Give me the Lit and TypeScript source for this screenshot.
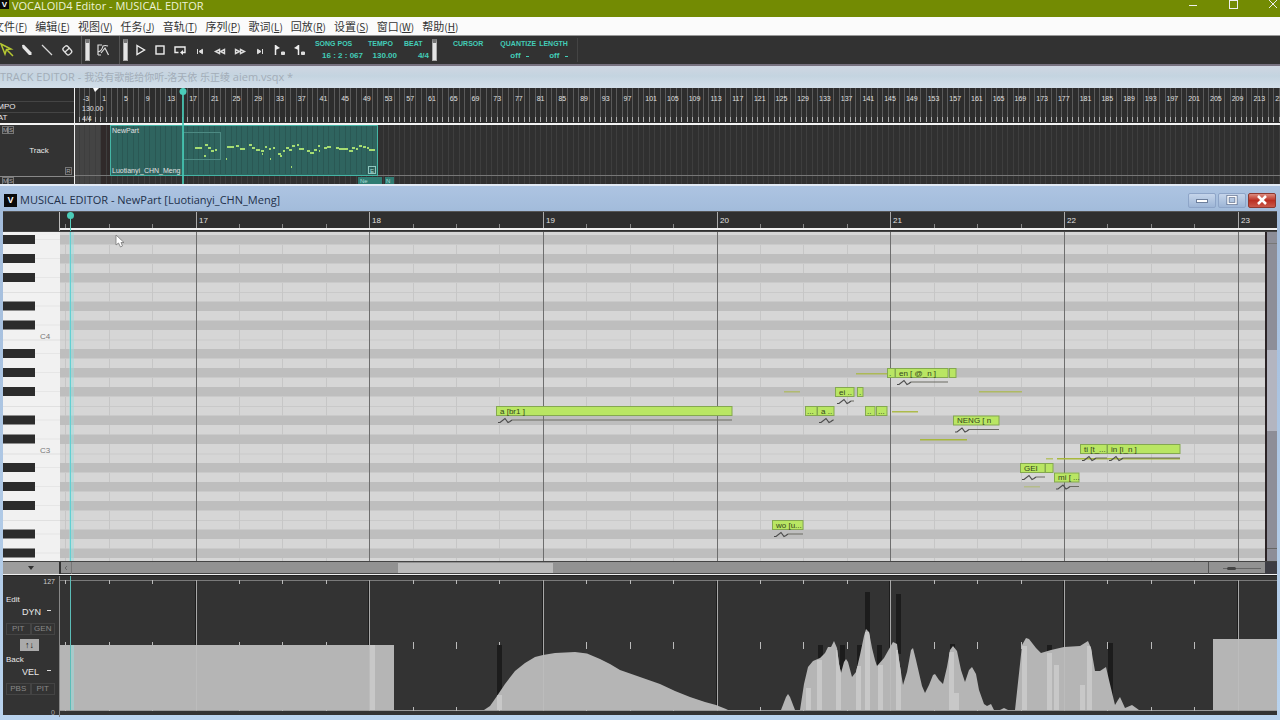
import { LitElement, html, svg, css } from "lit";
import { customElement, state } from "lit/decorators.js";

/* ---------- shared scales ---------- */
const TRACK_MEASURE = 5.43; // width of one measure in the track view
const TRACK_FIRST = -2; // number of the measure at the left edge of the track view
const TRACK_ORIGIN = 8;
const TRACK_HEAD = 75;
const MEASURE = 173.7; // width of one measure in the piano roll
const BEAT = MEASURE / 4;
const FIRST_MEASURE = 17;
const FIRST_OFFSET = 136;
const ROLL_LEFT = 60;
const KEY = 9.5; // height of one key
const TOP_KEY = 3; // visible part of the topmost key

/* Keys going down from A#4; true marks a black key. */
const OCTAVE = [true, false, true, false, true, false, false, true, false, true, false, false];
const keys = Array.from({ length: 35 }, (_, i) => ({
  black: OCTAVE[i % 12],
  y: TOP_KEY + i * KEY,
  split: i % 12 === 6 || i % 12 === 11,
  name: i % 12 === 10 && i < 34 ? `C${4 - Math.floor(i / 12)}` : "",
}));

interface Note { x: number; row: number; w: number; text: string; pitch?: boolean }
const notes: Note[] = [
  { x: 436, row: 18, w: 236, text: "a [br1 ]", pitch: true },
  { x: 712, row: 30, w: 31, text: "wo [u...", pitch: true },
  { x: 745, row: 18, w: 12, text: "..." },
  { x: 757, row: 18, w: 17, text: "a ..", pitch: true },
  { x: 775, row: 16, w: 19, text: "ei ..", pitch: true },
  { x: 797, row: 16, w: 6, text: "." },
  { x: 805, row: 18, w: 10, text: ".." },
  { x: 816, row: 18, w: 11, text: "..." },
  { x: 827, row: 14, w: 8, text: "." },
  { x: 835, row: 14, w: 53, text: "en [ @_n ]", pitch: true },
  { x: 889, row: 14, w: 7, text: "" },
  { x: 893, row: 19, w: 46, text: "NENG [ n", pitch: true },
  { x: 960, row: 24, w: 25, text: "GEI", pitch: true },
  { x: 985, row: 24, w: 8, text: "" },
  { x: 994, row: 25, w: 25, text: "mi [ ...", pitch: true },
  { x: 1020, row: 22, w: 27, text: "ti [t_...", pitch: true },
  { x: 1047, row: 22, w: 73, text: "in [i_n ]", pitch: true },
];
const glides = [
  [724, 159, 16, 0.6], [796, 141, 32, 0.8], [832, 179, 26, 0.9], [860, 207, 47, 1], [919, 159, 43, 0.7],
  [964, 254, 16, 0.4], [986, 226, 7, 0.7], [997, 226, 123, 1],
];
const partNotes = [
  [85, 22, 7], [95, 19, 3], [98, 22, 3], [101, 25, 3], [105, 24, 2], [94, 30, 2], [116, 33, 1], [117, 21, 7],
  [126, 20, 3], [130, 23, 5], [139, 19, 3], [142, 22, 3], [146, 24, 4], [151, 25, 3], [152, 28, 1], [155, 21, 2],
  [159, 23, 2], [160, 33, 1], [163, 22, 2], [168, 28, 3], [170, 30, 2], [173, 25, 2], [176, 22, 3], [179, 24, 3],
  [182, 20, 3], [187, 19, 2], [189, 23, 5], [197, 25, 3], [200, 27, 4], [204, 24, 3], [208, 20, 2], [209, 25, 1],
  [214, 22, 3], [217, 21, 4], [226, 22, 3], [229, 23, 9], [239, 25, 4], [242, 22, 3], [246, 23, 2], [249, 20, 3],
  [253, 21, 3], [257, 22, 2], [259, 24, 6], [181, 41, 1],
];

/* Dynamics curve, in units of the parameter pane. */
const dynamics = [
  "M-1 134V69H334V134Z",
  "M424 134L430 130 437 120 445 108 455 95 465 87 475 81 483 79 495 77 515 76 527 77.500 540 83 550 88 560 94 580 101 600 108 615 115 630 121 645 126 656 129 666 133 668 134Z",
  "M721 134L726 121 728 118 730 121 735 134Z",
  "M740 134L744 108 748 91 753 85 760 82 765 77 768 71 771 71 774 65 777 72 779 88 781 97 784 86 786 83 788 86 792 101 796 96 800 79 804 60 806 53 809 56 812 72 815 84 817 90 824 82 833 66 837 68 839 84 843 109 847 96 851 74 853 72 856 84 862 110 865 117 869 109 873 99 875 98 879 104 883 108 887 91 890 74 893 70 897 75 901 94 905 106 909 94 912 91 916 98 919 114 924 128 927 130 931 128 934 134Z",
  "M940 134L944 132 948 134Z",
  "M955 134L960 88 962 69 966 62 969 63 976 72 981 77 991 74 1004 71 1020 70 1028 65 1031 72 1035 95 1040 95 1046 91 1049 104 1055 129 1058 124 1060 121 1065 132 1072 129 1079 134Z",
  "M1153 134V63H2600V134Z",
];
const shadowBars = [
  [437, 69, 60], [758, 69, 20], [780, 69, 32], [797, 69, 30], [805, 16, 60], [817, 69, 24], [836, 18, 60],
  [890, 68, 10], [987, 69, 14], [1048, 67, 64],
];
const lightBars = [
  [310, 69], [437, 119], [746, 112], [757, 84], [776, 74], [796, 90], [805, 56], [818, 89], [836, 74], [889, 76],
  [894, 117], [962, 70], [987, 77], [994, 89], [1020, 109], [1027, 70],
];

const MENUS = [["文件", "F"], ["编辑", "E"], ["视图", "V"], ["任务", "J"], ["音轨", "T"], ["序列", "P"],
  ["歌词", "L"], ["回放", "R"], ["设置", "S"], ["窗口", "W"], ["帮助", "H"]];

const icon = (body: unknown) => html`<svg class="icon" width="20" height="20" viewBox="0 0 20 20" aria-hidden="true">${body}</svg>`;
const EDIT_TOOLS = [
  ["Select", svg`<path d="M4 4L14 9 9.500 9.500 8 14Z M9.500 9.500L16 16" fill="none" stroke="#b5c832" stroke-width="1.500"/>`],
  ["Pencil", svg`<path d="M5 5L7 4.800 14.500 12.500 14.500 15 12 15 5.500 8Z" fill="#e6e6e6"/>`],
  ["Line", svg`<path d="M5 5L15 15" stroke="#d8d8d8" stroke-width="1.300"/>`],
  ["Eraser", svg`<g fill="none" stroke="#e0e0e0" stroke-width="1.300"><rect x="6" y="7" width="9" height="6" rx="2" transform="rotate(48 10 10)"/><path d="M8 12L12.500 8"/></g>`],
] as const;
const TRANSPORT = [
  ["Play", svg`<path d="M7 5.500L14.500 10 7 14.500Z" fill="none" stroke="#eee" stroke-width="1.400"/>`],
  ["Stop", svg`<rect x="6" y="6" width="8" height="8" fill="none" stroke="#eee" stroke-width="1.400"/>`],
  ["Loop", svg`<path d="M8.500 12.500H5V7H15V12.500H12" fill="none" stroke="#eee" stroke-width="1.400"/><path d="M13 10V15L10 12.500Z" fill="#eee"/>`],
  ["To start", svg`<path d="M7.500 9V14M12.500 9.300V13.700L9 11.500Z" fill="#ddd" stroke="#ddd"/>`],
  ["Rewind", svg`<path d="M9.500 9.500V13.500L5.500 11.500ZM14.500 9.500V13.500L10.500 11.500Z" fill="none" stroke="#ddd" stroke-width="1.400"/>`],
  ["Forward", svg`<path d="M5.500 9.500V13.500L9.500 11.500ZM10.500 9.500V13.500L14.500 11.500Z" fill="none" stroke="#ddd" stroke-width="1.400"/>`],
  ["To end", svg`<path d="M12.500 9V14M7.500 9.300V13.700L11 11.500Z" fill="#ddd" stroke="#ddd"/>`],
  ["Start marker", svg`<path d="M5.500 5V15" stroke="#eee" stroke-width="1.500"/><path d="M5.500 5L10 8 5.500 10Z" fill="#eee"/><path d="M11.500 12H14.500V14.500H11.500Z" fill="#ddd" stroke="#ddd"/>`],
  ["End marker", svg`<path d="M8.500 5V15" stroke="#eee" stroke-width="1.500"/><path d="M8.500 5L4 8 8.500 10Z" fill="#eee"/><path d="M11.500 12H14.500V14.500H11.500Z" fill="#ddd" stroke="#ddd"/>`],
] as const;

@customElement("app-root")
export class AppRoot extends LitElement {
  static styles = css`
    :host { display: flex; flex-direction: column; height: 100vh; overflow: hidden; background: #333;
      font-family: "Liberation Sans", "Noto Sans CJK SC", sans-serif; color: #e8e8e8; }
    * { box-sizing: border-box; }
    button, select { font: inherit; color: inherit; background: none; border: 0; padding: 0; margin: 0; }
    select { appearance: none; }
    svg { display: block; }
    .logo { background: #0a0a0a; color: #fff; font: bold 8px "Liberation Sans", sans-serif; text-align: center; flex: none; }

    .titlebar { flex: none; display: flex; align-items: flex-start; height: 17px; background: #738b03; color: #eef2d6;
      font: 11px/11px "Open Sans", "Noto Sans", sans-serif; }
    .titlebar .logo { width: 9px; height: 9px; line-height: 9px; margin-right: 3px; }
    .titlebar .name { flex: 1; white-space: nowrap; }
    .titlebar .sys { width: 40px; height: 16px; }
    .titlebar .syss { display: flex; margin-right: -13px; }

    .menubar { flex: none; display: flex; gap: 8px; height: 18px; background: #fbfbfb; color: #333;
      padding-left: 3px; margin-left: -10px; align-items: center;
      font: 11px/18px "Noto Sans CJK SC", sans-serif; }
    .menubar button { white-space: nowrap; }
    .key { font-size: 10px; }

    .toolbar { flex: none; display: flex; align-items: center; height: 31px; background: #323232;
      border-top: 1px solid #999; border-bottom: 2px solid #77717f; }
    .tools { display: flex; height: 28px; align-items: center; }
    .tools button { width: 20px; height: 20px; }
    .edit { margin-left: -3px; border-right: 1px solid #555; padding-right: 4px; }
    .ctl { border-right: 1px solid #555; padding: 0 6px 0 1px; }
    .grip { width: 5px; height: 22px; margin: 0 2px 0 3px; background: #e4e4e4; border: 1px solid #aaa; border-top: 4px solid #777; flex: none; }
    .readout { display: flex; padding-left: 12px; color: #43cdb8; font: bold 7px/12px "Liberation Sans", sans-serif; }
    .readout .val { font-size: 8px; white-space: pre; display: block; text-align: right; }
    .readout label { display: block; }
    .readout select { font-size: 8px; width: 20px; height: 12px; line-height: 12px; display: block; margin-left: 10px;
      background: linear-gradient(#43cdb8, #43cdb8) right 1px top 6px / 3px 1px no-repeat; }
    .readout.now { padding-left: 3px; gap: 5px; }
    .song { width: 50px; }
    .tempo { width: 29px; }
    .beat { width: 27px; padding-left: 2px; }
    .readout.settings { gap: 3px; padding: 0 8px 0 14px; border-right: 1px solid #444; }
    .cursor { margin-right: 14px; }

    .tracktitle { flex: none; height: 22px; background: linear-gradient(#cfd6e2, #c4d4e0 45%, #d3dfea); color: #a3adb8;
      font: 11px/22px "Open Sans", "Noto Sans CJK SC", sans-serif; white-space: nowrap; overflow: hidden; }
    .song-name { font-size: 10px; }
    .tracks { flex: none; display: grid; grid-template-columns: 75px 1fr; height: 96px; background: #303030; overflow: hidden; }
    .heads { border-right: 1px solid #eee; overflow: hidden; font-size: 8px; line-height: 10px; }
    .rulerhead { height: 35px; padding-top: 13px; display: flex; flex-direction: column; align-items: flex-start; background: #2b2b2b; }
    .rulerhead span { border-top: 1px solid #444; width: 74px; text-indent: -13px; height: 11px; }
    .trackhead { border-top: 2px solid #f4f4f4; height: 53px; display: flex; flex-direction: column; justify-content: space-between;
      background: #333; padding: 1px 2px; }
    .trackhead .mid { text-align: center; line-height: 10px; padding-left: 4px; }
    .mini { font-size: 6px; line-height: 7px; color: #aaa; height: 8px; display: flex; }
    .mini button { border: 1px solid #777; width: 6px; height: 8px; line-height: 6px; }
    .mini.end { justify-content: flex-end; }
    .mini.end button { width: 7px; }
    .next { border-top: 1px solid #888; height: 9px; padding: 0 2px; }
    .lane { min-width: 0; overflow: hidden; }

    .win { flex: 1; min-height: 0; display: flex; flex-direction: column; padding: 0 3px 5px 3px; border-top: 2px solid #e2eaf5;
      background: linear-gradient(#adc4e2, #a3bcdb 24px, #b9d3ee); }
    .wintitle { flex: none; height: 25px; display: flex; align-items: center; color: #22304a; font: 11px/20px "Open Sans", "Noto Sans", sans-serif; padding-top: 3px; }
    .wintitle .logo { width: 13px; height: 13px; line-height: 13px; margin: 0 3px 0 1px; font-size: 9px; }
    .wintitle .name { flex: 1; white-space: nowrap; }
    .wintitle button { width: 28px; height: 15px; margin-right: 2px; border: 1px solid #8ea5c8; border-radius: 2px; background: linear-gradient(#c5d5ea, #9db5d6); display: grid; place-items: center; }
    .wintitle button.close { background: linear-gradient(#dc8c80, #bb2f22 50%, #c9584a); border-color: #8d3830; margin-right: 1px; }
    .row { display: grid; grid-template-columns: 57px 1fr; }
    .ruler { flex: none; height: 21px; background: #2f2f2f; border-top: 1px solid #555; border-bottom: 1px solid #444; }
    .corner { border-right: 1px solid #bbb; background: #303030; }
    .rule { overflow: hidden; min-width: 0; }
    .roll { flex: 1; min-height: 0; grid-template-columns: 57px 1fr 12px; background: #d6d6d6; }
    .roll > svg, .rule > svg { width: 100%; height: 100%; overflow: hidden; }
    .vbar { background: #8d8e98; border-left: 2px solid #2b2326; display: flex; flex-direction: column; }
    .vbar .up { height: 12px; border-bottom: 1px solid #777; }
    .vbar .sp { flex: 107; }
    .vbar .thumb { flex: 81; background: #b3b5c0; }
    .vbar .rest { flex: 118; border-bottom: 1px solid #666; }
    .vbar .down { height: 12px; }
    .hbar { flex: none; height: 14px; border-top: 1px solid #444; border-bottom: 1px solid #f0f0f0; background: #929292;
      display: flex; box-shadow: inset 0 -1px 0 #444; }
    .hbar .mode { width: 58px; border-right: 2px solid #333; display: grid; place-items: center; background: #9d9d9d; }
    .hbar .arrow { width: 11px; border-right: 1px solid #777; display: grid; place-items: center; }
    .hbar .a { flex: 326; }
    .hbar .t { flex: 155; background: #bbb; margin: 1px 0; }
    .hbar .b { flex: 656; border-right: 1px solid #555; }
    .hbar .zoom { width: 56px; display: flex; align-items: center; padding: 0 4px 0 14px; }
    .hbar .end { width: 12px; background: #3d3d44; }
    input[type="range"] { appearance: none; width: 100%; height: 10px; margin: 0; background: linear-gradient(#666, #666) center / 100% 1px no-repeat; }
    input[type="range"]::-webkit-slider-thumb { appearance: none; width: 9px; height: 3px; background: #444; border-radius: 2px; }
    .params { flex: none; height: 140px; background: #333; border-top: 1px solid #222; }
    .side { border-right: 1px solid #888; display: flex; flex-direction: column; padding: 0 4px 0 3px; font-size: 8px; }
    .side .max { font-size: 7px; line-height: 9px; text-align: right; color: #ccc; height: 19px; padding-top: 1px; }
    .side .min { font-size: 7px; line-height: 9px; text-align: right; color: #aaa; margin-top: 13px; }
    .side label { line-height: 10px; height: 11px; }
    .side select { font-size: 9px; height: 12px; line-height: 12px; width: 34px; margin-left: 12px; padding-left: 4px; display: block;
      background: linear-gradient(#ddd, #ddd) right 1px top 4px / 4px 1px no-repeat; }
    .side .pair { display: grid; grid-template-columns: 1fr 1fr; height: 12px; margin-top: 5px; }
    .side .pair button { border: 1px solid #444; color: #888; font-size: 8px; line-height: 10px; }
    .side .swap { align-self: flex-start; width: 19px; height: 12px; line-height: 12px; margin: 4px 0 4px 14px; background: #aaa; color: #111; font-size: 9px; }
  `;

  @state() private wide = window.innerWidth;
  private onResize = () => { this.wide = window.innerWidth; };

  connectedCallback() {
    super.connectedCallback();
    window.addEventListener("resize", this.onResize);
  }
  disconnectedCallback() {
    window.removeEventListener("resize", this.onResize);
    super.disconnectedCallback();
  }

  private get measures() {
    const count = Math.max(1, Math.ceil((this.wide - ROLL_LEFT - FIRST_OFFSET - 15) / MEASURE));
    return Array.from({ length: count }, (_, i) => ({ n: FIRST_MEASURE + i, x: Math.floor(FIRST_OFFSET + i * MEASURE) }));
  }
  private get beats() {
    const count = Math.ceil(this.wide / BEAT);
    return Array.from({ length: count }, (_, i) => i - 3)
      .filter((i) => i % 4 !== 0)
      .map((i) => Math.floor(FIRST_OFFSET + i * BEAT));
  }

  private trackLane() {
    const count = Math.ceil((this.wide - TRACK_HEAD) / TRACK_MEASURE) + 1;
    const mx = (n: number) => TRACK_ORIGIN + 1 + (n - TRACK_FIRST) * TRACK_MEASURE;
    const lines = Array.from({ length: count }, (_, i) => Math.round(mx(TRACK_FIRST + i - 1)));
    const labels = Array.from({ length: Math.floor(count / 4) }, (_, i) => 1 + i * 4);
    return svg`
      <svg class="lane" width="100%" height="96" font-family="Liberation Sans, sans-serif" fill="#e0e0e0">
        <rect width="100%" height="35" fill="#2d2d2d"/>
        <g shape-rendering="crispEdges">
          <rect y="37" width="25" height="60" fill="#444"/>
          <rect x="25" y="37" width="10" height="60" fill="#302a2a"/>
          ${lines.map((x) => svg`<rect x=${x} y="0" width="1" height="29" fill="#5a5a5a"/>
            <rect x=${x} y="29" width="1" height="5" fill="#aaa"/>
            <rect x=${x} y="37" width="1" height="60" fill="#3e3e3e"/>`)}
          <rect y="35" width="100%" height="2" fill="#f4f4f4"/>
          <rect y="87" width="100%" height="1" fill="#777"/>
        </g>
        <g font-size="7">
          <text x="8" y="13">-3</text>
          ${labels.map((n) => svg`<text x=${mx(n) + 2} y="13">${n}</text>`)}
          <text x="7" y="23">130.00</text><text x="7" y="33">4/4</text>
        </g>
        <path d="M18 0H24L20 4Z" fill="#fff"/>
        <rect x="36" y="37" width="266" height="50" fill="#2f645f"/>
        <g shape-rendering="crispEdges">
          ${lines.filter((x) => x > 37 && x < 302).map((x) => svg`<rect x=${x} y="38" width="1" height="48" fill="#2a5854"/>`)}
          <rect x="35.500" y="37.500" width="267" height="50" fill="none" stroke="#45b5a5"/>
          <rect x="108.500" y="44.500" width="37" height="27" fill="none" stroke="#4d8a83"/>
          ${partNotes.map(([x, y, w]) => svg`<rect x=${x + 35} y=${y + 37} width=${w} height="2" fill="#a5dc72"/>`)}
        </g>
        <text x="37" y="45" font-size="7">NewPart</text>
        <text x="37" y="85" font-size="7">Luotianyi_CHN_Meng</text>
        <rect x="293.500" y="78.500" width="7" height="7" fill="none" stroke="#8fc6bd"/><text x="295" y="85" font-size="6" fill="#aaddd4">E</text>
        <rect x="283" y="89" width="24" height="7" fill="#2f7c73"/><rect x="310" y="89" width="9" height="7" fill="#2f7c73"/>
        <text x="285" y="95" font-size="6" fill="#aaddd4">Ne</text><text x="311" y="95" font-size="6" fill="#aaddd4">N</text>
        <rect x="107" y="0" width="2" height="96" fill="#45c8b4" opacity=".85"/>
        <circle cx="108" cy="3.500" r="3.500" fill="#4bcdb9"/>
      </svg>`;
  }

  private wave(n: Note) {
    const y = TOP_KEY + (n.row + 1) * KEY + 5;
    const x = n.x + 2;
    const end = n.x + n.w;
    return svg`<path d="M${x} ${y + 2}L${x + 2} ${y + 2} ${x + 7} ${y - 2} ${x + 10} ${y + 2} ${x + 12} ${y + 1} ${x + 14} ${y - 0.5}"
      fill="none" stroke="#4c4c4c" stroke-width="1.200"/>
      <rect x=${x + 14} y=${y - 1} width=${Math.max(end - x - 14, 0)} height="1" fill="#6a6a62"/>`;
  }

  private roll() {
    return html`
      <svg class="keys" aria-label="Keyboard">
        <rect width="57" height="100%" fill="#f1f1f1"/>
        ${keys.map((k) => svg`
          ${k.black ? svg`<rect width="32" height="9" y=${k.y} fill="#2c2c2c"/><rect x="32" width="25" height="1" y=${k.y + 4} fill="#e6e6e6"/>` : ""}
          ${k.split ? svg`<rect width="57" height="1" y=${k.y} fill="#e0e0e0"/>` : ""}
          ${k.name ? svg`<text x="37" y=${k.y + 8.5} font-size="8" fill="#777">${k.name}</text>` : ""}`)}
      </svg>
      <svg class="grid" aria-label="Piano roll" font-family="Liberation Sans, sans-serif">
        <rect width="100%" height="100%" fill="#d6d6d6"/>
        ${keys.map((k) => k.black
          ? svg`<rect width="100%" height=${KEY} y=${k.y} fill="#bebebe"/>`
          : k.split ? svg`<rect width="100%" height="1" y=${k.y} fill="#c9c9c9"/>` : "")}
        <g shape-rendering="crispEdges">
          ${this.beats.map((x) => keys.filter((k) => !k.black).map((k) =>
            svg`<rect x=${x} y=${k.y} width="1" height=${KEY} fill="#c6c6c6"/>`))}
          ${this.measures.map((m) => svg`<rect x=${m.x} width="1" height="100%" fill="#6e6e6e"/>`)}
        </g>
        ${glides.map(([x, y, w, o]) => svg`<rect x=${x} y=${y} width=${w} height="1.500" fill="#a8b83c" opacity=${o}/>`)}
        ${notes.map((n) => {
          const y = TOP_KEY + n.row * KEY;
          return svg`<rect x=${n.x + 0.5} y=${y + 0.5} width=${n.w - 0.5} height="9" fill="#b9e663" stroke="#84a850"/>
            <text x=${n.x + (n.w > 15 ? 4 : 2)} y=${y + 7.5} font-size="8" fill="#33451a">${n.text}</text>
            ${n.pitch ? this.wave(n) : ""}`;
        })}
        <rect x="9" width="5" height="100%" fill="#9adfe0" opacity=".45"/>
        <rect x="10" width="1" height="100%" fill="#62cfd2"/>
        <path d="M56 3V13L58.500 11 60.500 15 62.500 14 61 10.500H64Z" fill="#fff" stroke="#777" stroke-width=".8"/>
      </svg>`;
  }

  private params() {
    const beats = this.beats;
    const measures = this.measures;
    const ticks = (y: number, h: number) => beats.map((x) => svg`<rect x=${x} y=${y} width="1" height=${h} fill="#bbb"/>`);
    return svg`
      <svg aria-label="Dynamics">
        <g shape-rendering="crispEdges">
          <rect y="4" width="100%" height="1" fill="#7a7a7a"/>
          <rect y="134" width="100%" height="1" fill="#999"/>
          ${ticks(4, 4)}${ticks(66, 7)}${ticks(131, 4)}
          ${measures.map((m) => svg`<rect x=${m.x - 1} y="5" width="1" height="129" fill="#1c1c1c"/><rect x=${m.x} y="4" width="1" height="131" fill="#a8a8a8"/>`)}
          ${shadowBars.map(([x, y, h]) => svg`<rect x=${x} y=${y} width="5" height=${h} fill="#1c1c1c"/>`)}
        </g>
        <clipPath id="curve">${dynamics.map((d) => svg`<path d=${d}/>`)}</clipPath>
        ${dynamics.map((d) => svg`<path d=${d} fill="#b5b5b5"/>`)}
        <g clip-path="url(#curve)">
          ${lightBars.map(([x, y]) => svg`<rect x=${x} y=${y} width="5" height="80" fill="#c8c8c8"/>`)}
          ${measures.map((m) => svg`<rect x=${m.x} width="1" height="134" fill="#bcbcbc"/>`)}
        </g>
        <rect x="10" y="69" width="4" height="65" fill="#9adfe0" opacity=".5"/>
        <rect x="10" y="0" width="1" height="134" fill="#5cbdb8"/>
      </svg>`;
  }

  render() {
    return html`
      <header class="titlebar">
        <span class="logo">V</span><span class="name">VOCALOID4 Editor - MUSICAL EDITOR</span>
        <span class="syss">
          <button class="sys" aria-label="Minimize"><svg width="40" height="16"><path d="M16 5.500H24" stroke="#eee"/></svg></button>
          <button class="sys" aria-label="Maximize"><svg width="40" height="16"><rect x="16.500" y=".5" width="8" height="8" fill="none" stroke="#eee"/></svg></button>
          <button class="sys" aria-label="Close"><svg width="40" height="16"><path d="M16 0L24 8M24 0L16 8" stroke="#eee"/></svg></button>
        </span>
      </header>
      <nav class="menubar">
        ${MENUS.map(([t, k]) => html`<button>${t}<span class="key">(<u>${k}</u>)</span></button>`)}
      </nav>
      <div class="toolbar">
        <div class="tools edit">${EDIT_TOOLS.map(([n, b]) => html`<button aria-label=${n}>${icon(b)}</button>`)}</div>
        <span class="grip"></span>
        <div class="tools ctl"><button aria-label="Control track">${icon(svg`<g fill="none" stroke="#ddd" stroke-width="1.200"><path d="M5 15V5H9M5 15H8M5 12Q9 11 10 6 12 5 15 6M8 13L12 8 15.500 15"/></g>`)}</button></div>
        <span class="grip"></span>
        <div class="tools">${TRANSPORT.map(([n, b]) => html`<button aria-label=${n}>${icon(b)}</button>`)}</div>
        <div class="readout now">
          <div class="song">&nbsp;SONG POS<span class="val">16 : 2 : 067</span></div>
          <div class="tempo">TEMPO<span class="val">130.00</span></div>
          <div class="beat">BEAT<span class="val">4/4</span></div>
        </div>
        <span class="grip"></span>
        <div class="readout settings">
          <div class="cursor">CURSOR<span class="val"> </span></div>
          <div><label for="q">QUANTIZE</label><select id="q"><option>off</option></select></div>
          <div><label for="l">LENGTH</label><select id="l"><option>off</option></select></div>
        </div>
      </div>

      <div class="tracktitle">TRACK EDITOR - <span class="song-name">我没有歌能给你听-洛天依 乐正绫</span> aiem.vsqx *</div>
      <section class="tracks">
        <div class="heads">
          <div class="rulerhead"><span>TEMPO</span><span>BEAT</span></div>
          <div class="trackhead">
            <div class="mini"><button>M</button><button>S</button></div>
            <div class="mid">Track</div>
            <div class="mini end"><button>R</button></div>
          </div>
          <div class="next mini"><button>M</button><button>S</button></div>
        </div>
        ${this.trackLane()}
      </section>

      <section class="win">
        <div class="wintitle">
          <span class="logo">V</span><span class="name">MUSICAL EDITOR - NewPart [Luotianyi_CHN_Meng]</span>
          <button aria-label="Minimize"><svg width="12" height="10"><rect x=".5" y="4.500" width="11" height="3" fill="#fff" stroke="#6d7f9c"/></svg></button>
          <button aria-label="Maximize"><svg width="12" height="10"><rect x="2" y="1.500" width="8" height="7" fill="none" stroke="#5f7190" stroke-width="3"/><rect x="2" y="1.500" width="8" height="7" fill="none" stroke="#fff" stroke-width="1.500"/></svg></button>
          <button class="close" aria-label="Close"><svg width="12" height="10"><path d="M2 1L10 9M10 1L2 9" stroke="#fff" stroke-width="2.500"/></svg></button>
        </div>
        <div class="row ruler">
          <div class="corner"></div>
          <div class="rule">
            <svg font-family="Liberation Sans, sans-serif" font-size="8" fill="#e0e0e0">
              <g shape-rendering="crispEdges">
                ${this.beats.map((x) => svg`<rect x=${x} y="12" width="1" height="4" fill="#888"/>`)}
                ${this.measures.map((m) => svg`<rect x=${m.x} y="0" width="1" height="17" fill="#aaa"/>`)}
                <rect y="16" width="100%" height="2" fill="#f2f2f2"/>
                <rect x="10" y="0" width="1" height="20" fill="#58cfc0"/>
              </g>
              ${this.measures.map((m) => svg`<text x=${m.x + 3} y="11">${m.n}</text>`)}
              <circle cx="10.500" cy="3.500" r="3.500" fill="#4bcdb9"/>
            </svg>
          </div>
        </div>
        <div class="row roll">
          ${this.roll()}
          <div class="vbar"><div class="up"></div><div class="sp"></div><div class="thumb"></div><div class="rest"></div><div class="down"></div></div>
        </div>
        <div class="hbar">
          <button class="mode" aria-label="View mode"><svg width="6" height="4"><path d="M0 0H6L3 4Z" fill="#333"/></svg></button>
          <div class="arrow"><svg width="4" height="6"><path d="M3 1L1 3 3 5" fill="none" stroke="#666"/></svg></div>
          <div class="a"></div><div class="t"></div><div class="b"></div>
          <div class="zoom"><input type="range" aria-label="Zoom" min="0" max="100" value="15" /></div>
          <div class="end"></div>
        </div>
        <div class="row params">
          <div class="side">
            <div class="max">127</div>
            <label for="edit">Edit</label>
            <select id="edit"><option>DYN</option></select>
            <div class="pair"><button>PIT</button><button>GEN</button></div>
            <button class="swap" aria-label="Swap">↑↓</button>
            <label for="back">Back</label>
            <select id="back"><option>VEL</option></select>
            <div class="pair"><button>PBS</button><button>PIT</button></div>
            <div class="min">0</div>
          </div>
          <div class="rule">${this.params()}</div>
        </div>
      </section>`;
  }
}
